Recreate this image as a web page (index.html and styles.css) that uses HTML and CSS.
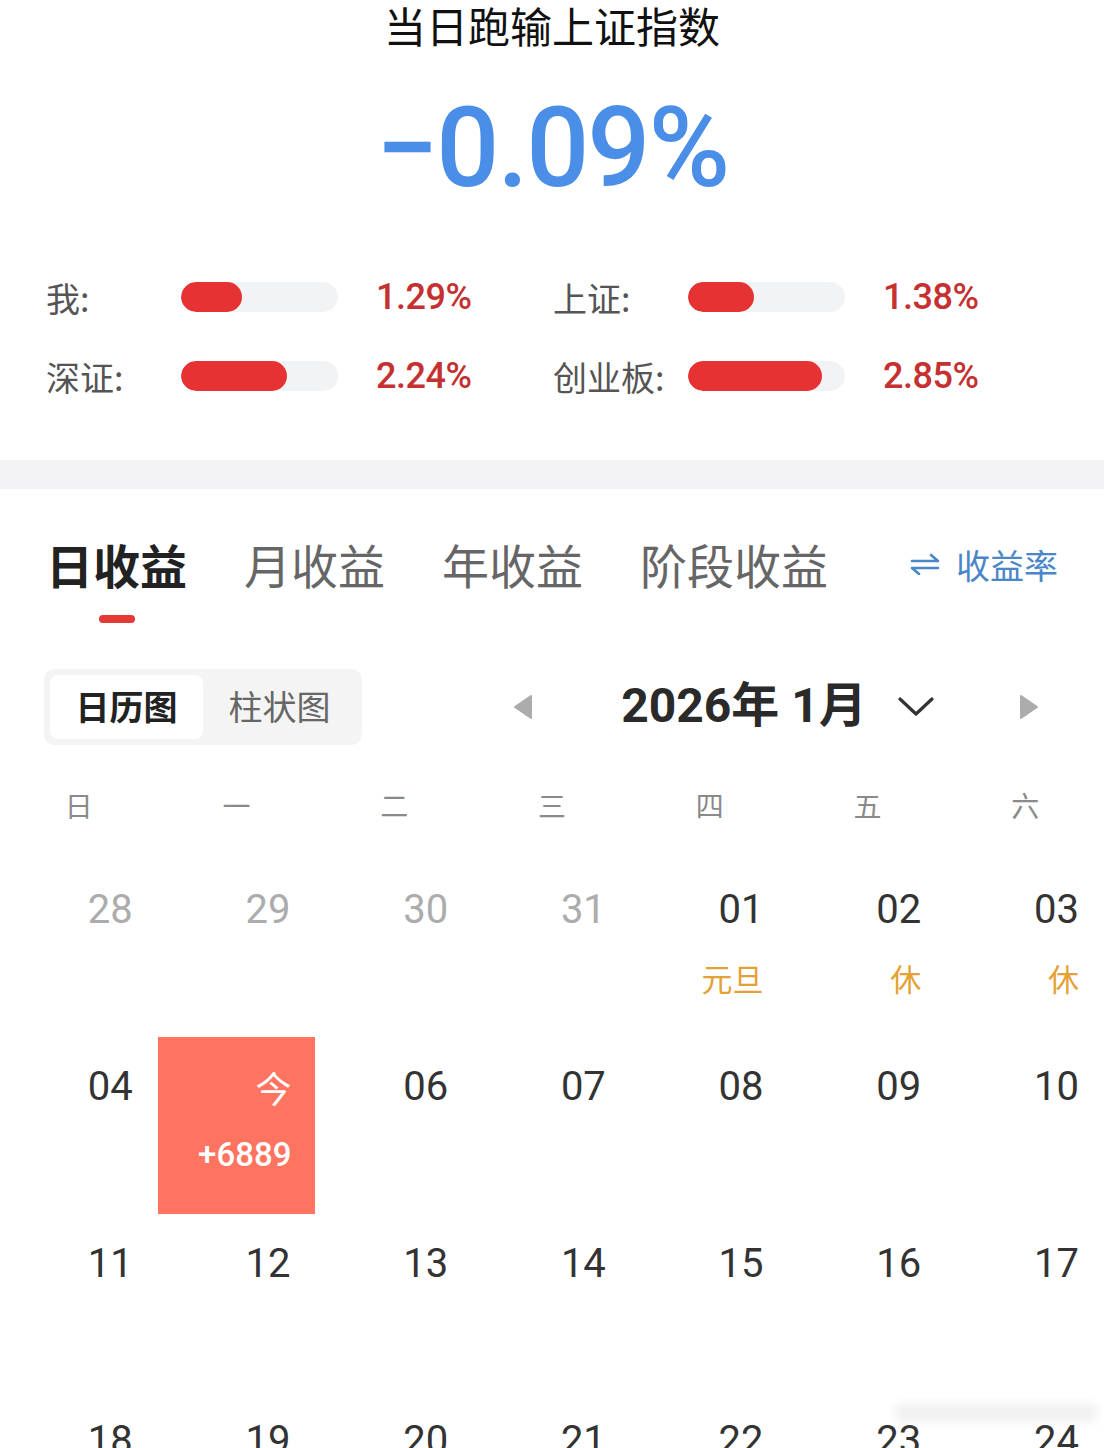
FILE: index.html
```html
<!DOCTYPE html>
<html lang="zh-CN">
<head>
<meta charset="utf-8">
<title>收益日历</title>
<link rel="stylesheet" href="styles.css">
</head>
<body>
<div class="page">
  <header class="summary">
    <h1 class="title">当日跑输上证指数</h1>
    <div class="diff">−0.09%</div>
    <div class="stats">
      <div class="stat"><span class="label">我:</span><div class="track"><div class="fill" style="width:61px"></div></div><span class="val">1.29%</span></div>
      <div class="stat"><span class="label">上证:</span><div class="track"><div class="fill" style="width:66px"></div></div><span class="val">1.38%</span></div>
      <div class="stat"><span class="label">深证:</span><div class="track"><div class="fill" style="width:106px"></div></div><span class="val">2.24%</span></div>
      <div class="stat"><span class="label">创业板:</span><div class="track"><div class="fill" style="width:134px"></div></div><span class="val">2.85%</span></div>
    </div>
  </header>

  <div class="band"></div>

  <nav class="tabs">
    <div class="tab active"><span class="tab-text">日收益</span><span class="tab-line"></span></div>
    <div class="tab"><span class="tab-text">月收益</span></div>
    <div class="tab"><span class="tab-text">年收益</span></div>
    <div class="tab"><span class="tab-text">阶段收益</span></div>
    <div class="rate">
      <svg class="rate-icon" width="30" height="22" viewBox="0 0 30 22" fill="none" stroke="currentColor" stroke-width="2.6" stroke-linecap="round" stroke-linejoin="round">
        <path d="M2 8 H28 L21 2"/>
        <path d="M28 15 H2 L9 21"/>
      </svg>
      <span>收益率</span>
    </div>
  </nav>

  <div class="toolbar">
    <div class="seg">
      <div class="seg-item on">日历图</div>
      <div class="seg-item">柱状图</div>
    </div>
    <div class="month-nav">
      <svg class="tri" width="22" height="26" viewBox="0 0 22 26"><path d="M19 2 L3 13 L19 24 Z" fill="#acacac" stroke="#acacac" stroke-width="2" stroke-linejoin="round"/></svg>
      <div class="month">
        <span class="month-text">2026年 1月</span>
        <svg class="chev" width="38" height="24" viewBox="0 0 38 24" fill="none" stroke="#333" stroke-width="3.2" stroke-linecap="round" stroke-linejoin="round"><path d="M3 4 L19 19 L35 4"/></svg>
      </div>
      <svg class="tri" width="22" height="26" viewBox="0 0 22 26"><path d="M3 2 L19 13 L3 24 Z" fill="#acacac" stroke="#acacac" stroke-width="2" stroke-linejoin="round"/></svg>
    </div>
  </div>

  <div class="weekdays">
    <span>日</span><span>一</span><span>二</span><span>三</span><span>四</span><span>五</span><span>六</span>
  </div>

  <div class="calendar">
    <div class="cell"><span class="num prev">28</span></div>
    <div class="cell"><span class="num prev">29</span></div>
    <div class="cell"><span class="num prev">30</span></div>
    <div class="cell"><span class="num prev">31</span></div>
    <div class="cell"><span class="num">01</span><span class="sub">元旦</span></div>
    <div class="cell"><span class="num">02</span><span class="sub">休</span></div>
    <div class="cell"><span class="num">03</span><span class="sub">休</span></div>

    <div class="cell"><span class="num">04</span></div>
    <div class="cell today"><span class="num">今</span><span class="sub">+6889</span></div>
    <div class="cell"><span class="num">06</span></div>
    <div class="cell"><span class="num">07</span></div>
    <div class="cell"><span class="num">08</span></div>
    <div class="cell"><span class="num">09</span></div>
    <div class="cell"><span class="num">10</span></div>

    <div class="cell"><span class="num">11</span></div>
    <div class="cell"><span class="num">12</span></div>
    <div class="cell"><span class="num">13</span></div>
    <div class="cell"><span class="num">14</span></div>
    <div class="cell"><span class="num">15</span></div>
    <div class="cell"><span class="num">16</span></div>
    <div class="cell"><span class="num">17</span></div>

    <div class="cell"><span class="num">18</span></div>
    <div class="cell"><span class="num">19</span></div>
    <div class="cell"><span class="num">20</span></div>
    <div class="cell"><span class="num">21</span></div>
    <div class="cell"><span class="num">22</span></div>
    <div class="cell"><span class="num">23</span></div>
    <div class="cell"><span class="num">24</span></div>
  </div>

  <div class="watermark"></div>
</div>
</body>
</html>
```
FILE: styles.css
```css
* {
  box-sizing: border-box;
  margin: 0;
  padding: 0;
}

html,
body {
  background: #ffffff;
}

body {
  margin: 0;
  font-family: "Noto Sans CJK SC", "Noto Sans", sans-serif;
}

.page {
  position: relative;
  width: 1104px;
  height: 1448px;
  overflow: hidden;
  background: #ffffff;
}

/* ---------- summary ---------- */
.title {
  padding-top: 2px;
  font-size: 42px;
  font-weight: 400;
  line-height: 46px;
  text-align: center;
  color: #111111;
}

.diff {
  margin-top: 30px;
  font-family: Roboto, "Noto Sans", sans-serif;
  font-size: 111px;
  font-weight: 500;
  letter-spacing: -2px;
  line-height: 140px;
  text-align: center;
  color: #4a8ee8;
}

.stats {
  display: grid;
  grid-template-columns: 507px 507px;
  row-gap: 19px;
  margin-top: 49px;
  padding-left: 46px;
}

.stat {
  display: flex;
  align-items: center;
  height: 60px;
}

.label {
  width: 135px;
  font-size: 34px;
  color: #555555;
}

.track {
  width: 157px;
  height: 30px;
  border-radius: 15px;
  background: #f2f3f5;
  overflow: hidden;
}

.fill {
  height: 100%;
  border-radius: 15px;
  background: #e63232;
}

.val {
  margin-left: 38px;
  font-family: Roboto, "Noto Sans", sans-serif;
  font-size: 36px;
  font-weight: 500;
  letter-spacing: -0.5px;
  color: #c53030;
}

.band {
  margin-top: 54px;
  height: 29px;
  background: #f3f3f6;
}

/* ---------- tabs ---------- */
.tabs {
  display: flex;
  align-items: flex-start;
  margin-top: 45px;
  padding: 0 46px 0 46px;
}

.tab {
  display: flex;
  flex-direction: column;
  align-items: center;
  margin-right: 57px;
}

.tab-text {
  font-size: 47px;
  line-height: 60px;
  color: #666666;
}

.tab.active .tab-text {
  font-weight: 700;
  color: #222222;
}

.tab-line {
  margin-top: 21px;
  width: 36px;
  height: 8px;
  border-radius: 4px;
  background: #e53935;
}

.rate {
  display: flex;
  align-items: center;
  gap: 16px;
  margin-left: auto;
  height: 60px;
  font-size: 34px;
  color: #4a86c8;
}

.rate-icon {
  display: block;
}

/* ---------- toolbar ---------- */
.toolbar {
  display: flex;
  align-items: center;
  margin-top: 46px;
  padding: 0 64px 0 44px;
  height: 76px;
}

.seg {
  display: flex;
  padding: 6px;
  border-radius: 10px;
  background: #f4f4f4;
}

.seg-item {
  display: flex;
  align-items: center;
  justify-content: center;
  width: 153px;
  height: 64px;
  padding-bottom: 4px;
  border-radius: 8px;
  font-size: 34px;
  color: #666666;
}

.seg-item.on {
  background: #ffffff;
  font-weight: 700;
  color: #222222;
}

.month-nav {
  flex: 1;
  display: flex;
  align-items: center;
  justify-content: space-between;
  margin-left: 150px;
}

.tri {
  display: block;
}

.month {
  display: flex;
  align-items: center;
  gap: 30px;
  font-family: Roboto, "Noto Sans CJK SC", sans-serif;
  font-size: 48px;
  font-weight: 700;
  color: #2a2a2a;
}

.month-text {
  padding-bottom: 12px;
  padding-left: 4px;
}

.chev {
  display: block;
}

/* ---------- calendar ---------- */
.weekdays {
  display: grid;
  grid-template-columns: repeat(7, 1fr);
  margin-top: 35px;
  line-height: 50px;
  font-size: 28px;
  text-align: center;
  color: #8a8a8a;
}

.calendar {
  display: grid;
  grid-template-columns: repeat(7, 1fr);
  grid-auto-rows: 177px;
  margin-top: 30px;
}

.cell {
  display: flex;
  flex-direction: column;
  align-items: flex-end;
  padding: 25px 25px 0 0;
}

.num {
  font-family: Roboto, "Noto Sans", sans-serif;
  font-size: 40px;
  line-height: 50px;
  color: #333333;
}

.num.prev {
  color: #acacac;
}

.sub {
  margin-top: 23px;
  font-size: 31px;
  line-height: 40px;
  color: #e3a136;
}

.cell.today {
  background: #fe7460;
  padding-right: 24px;
}

.cell.today .num {
  font-family: "Noto Sans CJK SC", sans-serif;
  font-size: 36px;
  color: #ffffff;
}

.cell.today .sub {
  font-family: Roboto, "Noto Sans", sans-serif;
  font-size: 33px;
  font-weight: 500;
  color: #ffffff;
}

/* blurred watermark streak at the bottom-right corner */
.watermark {
  position: absolute;
  right: 8px;
  bottom: 26px;
  width: 200px;
  height: 18px;
  background: rgba(200, 200, 200, 0.28);
  filter: blur(5px);
}
```
